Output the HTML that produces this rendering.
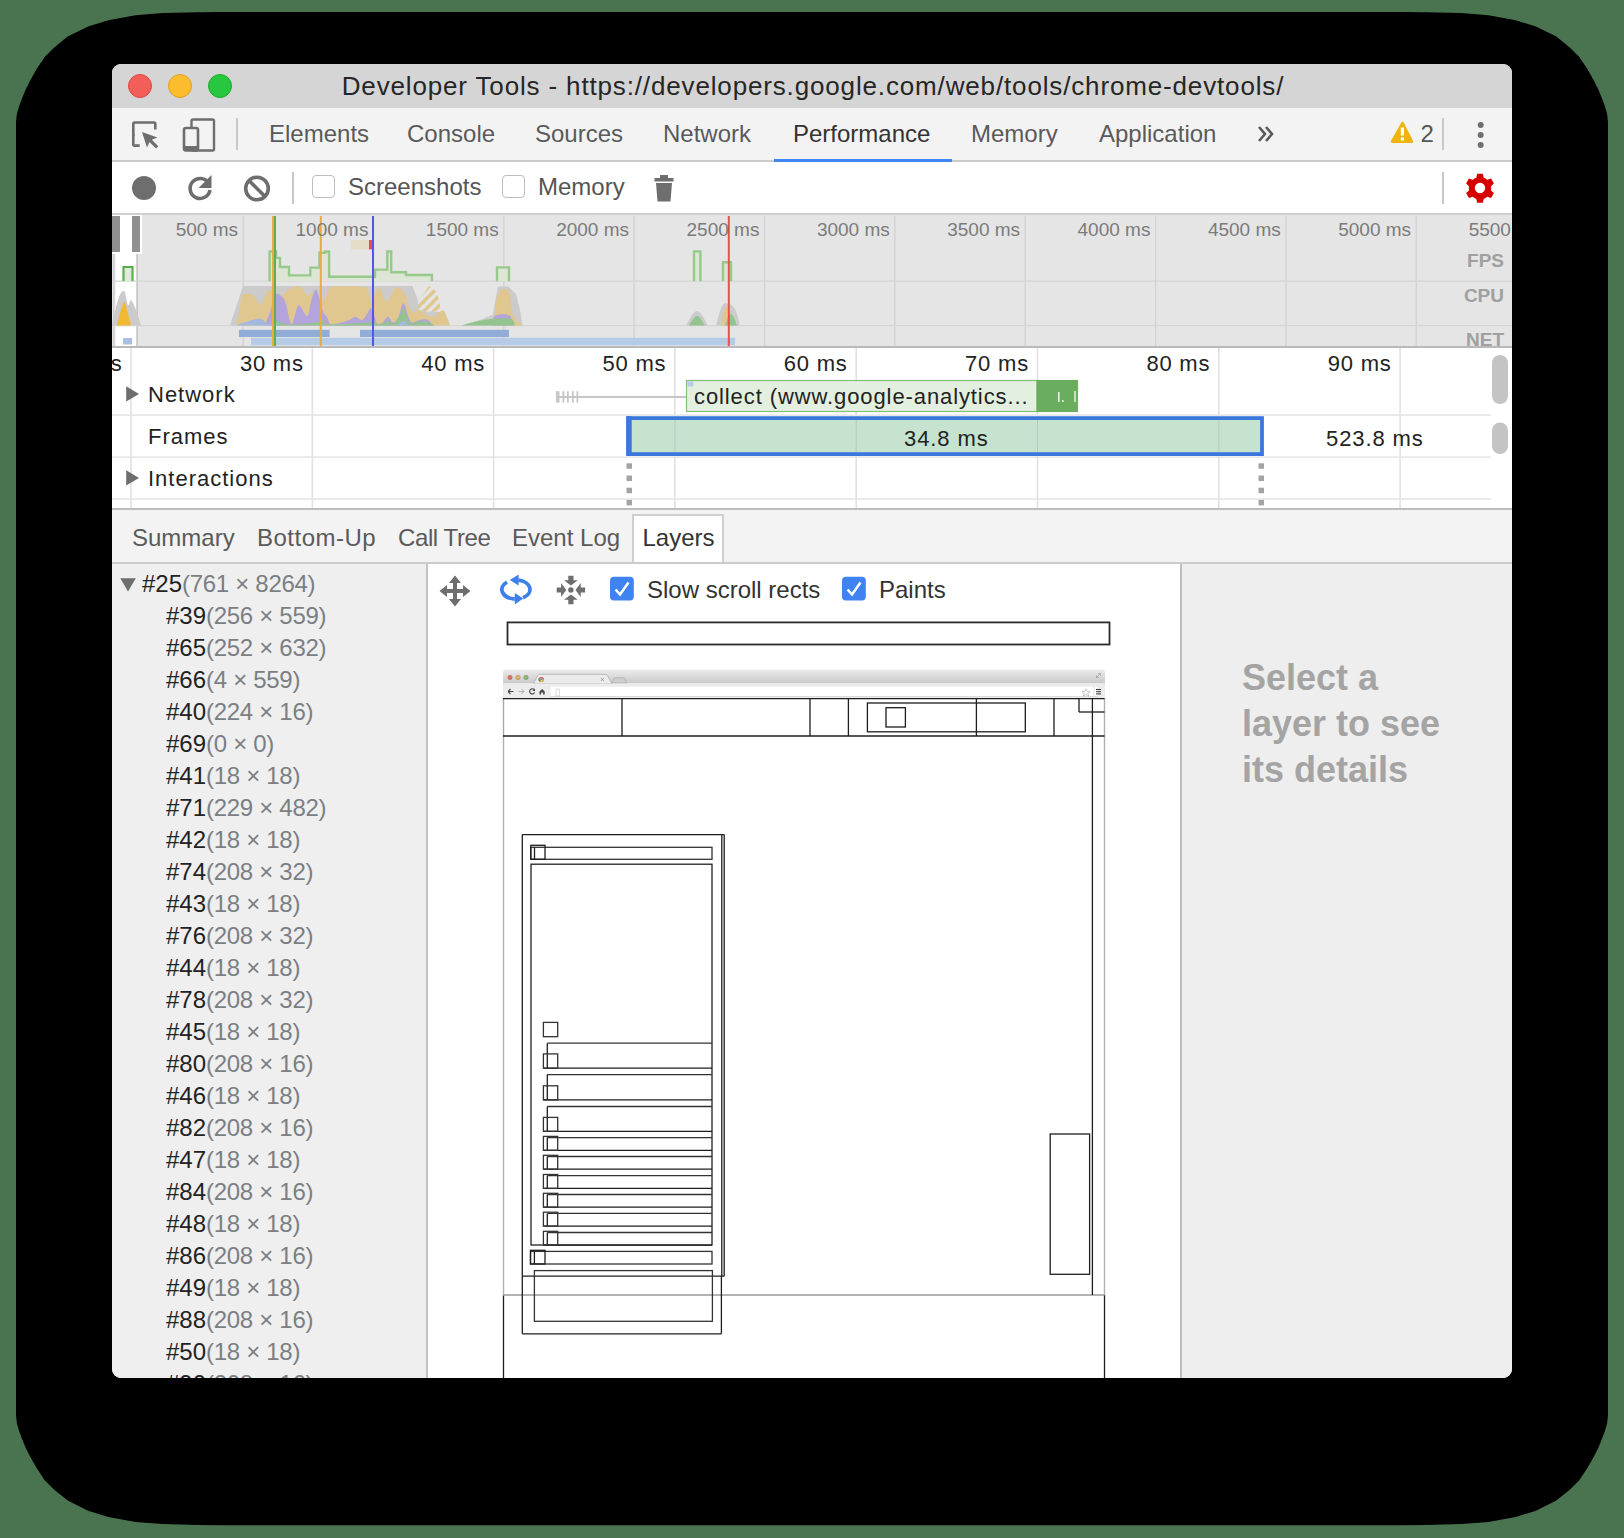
<!DOCTYPE html>
<html><head><meta charset="utf-8">
<style>
*{box-sizing:border-box;margin:0;padding:0}
html,body{width:1624px;height:1538px;overflow:hidden;background:rgb(74,116,79);font-family:"Liberation Sans",sans-serif}
#shadow{position:absolute;left:16px;top:12px;width:1592px;height:1513px;background:#000;border-radius:185px/103px}
#win{position:absolute;left:112px;top:64px;width:1400px;height:1314px;border-radius:9px;overflow:hidden;background:#fff}
.a{position:absolute}
svg{position:absolute;left:0;top:0;overflow:visible}
#title{left:0;top:0;width:1400px;height:44px;background:#d5d5d5}
.tl{position:absolute;top:10px;width:24px;height:24px;border-radius:50%}
#ttext{left:0;top:0;width:1400px;height:44px;line-height:44px;text-align:center;font-size:26px;letter-spacing:0.85px;color:#262626;padding-left:2px}
#tabbar{left:0;top:44px;width:1400px;height:54px;background:#f3f3f3;border-bottom:2px solid #cccccc}
.tab{position:absolute;top:44px;height:52px;line-height:52px;font-size:24px;color:#5a5a5a;white-space:nowrap}
#toolbar{left:0;top:98px;width:1400px;height:52px;background:#fff;border-bottom:1px solid #d0d0d0}
.tbl{position:absolute;top:98px;height:52px;line-height:50px;font-size:24px;color:#555;white-space:nowrap}
.cb{position:absolute;width:23px;height:23px;border:1.5px solid #bdbdbd;border-radius:4px;background:#fff}
.ovl{position:absolute;top:150px;font-size:19px;color:#7b7b7b;white-space:nowrap;line-height:32px;text-align:right}
.ovh{position:absolute;font-size:19px;font-weight:bold;color:#a0a0a0;right:8px;line-height:20px}
.tlh{position:absolute;top:285px;font-size:22px;letter-spacing:0.8px;color:#222;white-space:nowrap;line-height:30px;text-align:right}
.trow{position:absolute;left:36px;font-size:22px;letter-spacing:1px;color:#222;white-space:nowrap;line-height:30px}
</style></head><body>
<svg width="1624" height="1538" style="position:absolute;left:0;top:0"><path d="M16.0 121.9 L16.9 113.8 L19.5 105.0 L22.4 97.5 L25.7 89.4 L29.8 81.3 L36.6 69.1 L44.7 56.9 L54.2 47.4 L67.7 36.6 L88.0 26.4 L108.4 20.3 L135.5 15.2 L162.6 13.1 L197.8 12.2 L220.0 12.0 L1404.0 12.0 L1426.2 12.2 L1461.4 13.1 L1488.5 15.2 L1515.6 20.3 L1536.0 26.4 L1556.3 36.6 L1569.8 47.4 L1579.3 56.9 L1587.4 69.1 L1594.2 81.3 L1598.3 89.4 L1601.6 97.5 L1604.5 105.0 L1607.1 113.8 L1608.0 121.9 L1608.0 1415.3 L1607.1 1423.4 L1604.5 1432.2 L1601.6 1439.7 L1598.3 1447.8 L1594.2 1455.9 L1587.4 1468.1 L1579.3 1480.3 L1569.8 1489.8 L1556.3 1500.6 L1536.0 1510.8 L1515.6 1516.9 L1488.5 1522.0 L1461.4 1524.1 L1426.2 1525.0 L1404.0 1525.2 L220.0 1525.2 L197.8 1525.0 L162.6 1524.1 L135.5 1522.0 L108.4 1516.9 L88.0 1510.8 L67.7 1500.6 L54.2 1489.8 L44.7 1480.3 L36.6 1468.1 L29.8 1455.9 L25.7 1447.8 L22.4 1439.7 L19.5 1432.2 L16.9 1423.4 L16.0 1415.3Z" fill="#000"/></svg>
<div id="win">
  <div class="a" id="title"></div>
  <div class="tl" style="left:16px;background:#f35f58;border:1px solid #e2463f"></div>
  <div class="tl" style="left:56px;background:#fbbd2e;border:1px solid #dfa023"></div>
  <div class="tl" style="left:96px;background:#27c83f;border:1px solid #1dac2b"></div>
  <div class="a" id="ttext">Developer Tools - https://developers.google.com/web/tools/chrome-devtools/</div>
  <div class="a" id="tabbar"></div>
  <div class="tab" style="left:157px">Elements</div>
  <div class="tab" style="left:295px">Console</div>
  <div class="tab" style="left:423px">Sources</div>
  <div class="tab" style="left:551px">Network</div>
  <div class="tab" style="left:681px;color:#333">Performance</div>
  <div class="tab" style="left:859px">Memory</div>
  <div class="tab" style="left:987px">Application</div>
  <div class="tab" style="left:1308.5px;color:#555">2</div>
  <div class="a" style="left:662px;top:95px;width:178px;height:3px;background:#3d85f6"></div>
  <div class="a" id="toolbar"></div>
  <div class="cb" style="left:200px;top:111px"></div>
  <div class="tbl" style="left:236px">Screenshots</div>
  <div class="cb" style="left:390px;top:111px"></div>
  <div class="tbl" style="left:426px">Memory</div>
  <!-- icons: coordinates relative to window -->
  <svg width="1400" height="1314">
    <g fill="none" stroke="#6e6e6e" stroke-width="3">
      <!-- inspect -->
      <path d="M21.3 72 V59.8 Q21.3 58.5 22.6 58.5 H42 Q43.3 58.5 43.3 59.8 V65.5" stroke-width="2.6"/>
      <path d="M21.3 70 V80.3 Q21.3 81.6 22.6 81.6 H27.7" stroke-width="2.6"/>
      <!-- device -->
      <rect x="79.5" y="55.5" width="22.5" height="31" rx="1.5" stroke-width="2.4"/>
    </g>
    <path d="M30 61 L30 61" />
    <path d="M30 68 L45.5 73.5 L39.8 75.8 L46.3 82.2 L44 84.5 L37.5 78 L35 83.5 Z" fill="#6e6e6e"/>
    <rect x="72" y="64" width="14" height="22.5" rx="2" fill="#f3f3f3" stroke="#6e6e6e" stroke-width="2.6"/>
    <rect x="72" y="82" width="14" height="4" fill="#6e6e6e"/>
    <rect x="124" y="54" width="2" height="32" fill="#c8c8c8"/>
    <!-- chevrons -->
    <path d="M1147 63 L1153 70 L1147 77 M1154 63 L1160 70 L1154 77" fill="none" stroke="#5a5a5a" stroke-width="2.6"/>
    <!-- warning -->
    <path d="M1290.5 58.5 L1300 77 Q1300.5 78 1299.5 78 L1280.5 78 Q1279.5 78 1280 77 Z" fill="#eeb40d" stroke="#eeb40d" stroke-width="2" stroke-linejoin="round"/>
    <rect x="1288.8" y="63.5" width="3.2" height="8" fill="#fff"/>
    <rect x="1288.8" y="73.5" width="3.2" height="3" fill="#fff"/>
    <rect x="1330" y="54" width="2" height="32" fill="#c8c8c8"/>
    <circle cx="1368.7" cy="61" r="3" fill="#6e6e6e"/>
    <circle cx="1368.7" cy="71" r="3" fill="#6e6e6e"/>
    <circle cx="1368.7" cy="81" r="3" fill="#6e6e6e"/>
    <!-- toolbar icons -->
    <circle cx="32" cy="124" r="12" fill="#6e6e6e"/>
    <path d="M96.5 119 A10 10 0 1 0 98 126" fill="none" stroke="#6e6e6e" stroke-width="3.6"/>
    <path d="M99.5 111 L99.5 124 L86.5 124 Z" fill="#6e6e6e"/>
    <circle cx="145" cy="124.5" r="11.3" fill="none" stroke="#6e6e6e" stroke-width="3.6"/>
    <path d="M137.2 116.7 L152.8 132.3" stroke="#6e6e6e" stroke-width="3.6"/>
    <rect x="180" y="108" width="2" height="32" fill="#c8c8c8"/>
    <!-- trash -->
    <path d="M542.5 114 h19 v3.5 h-19z M548 111 h8 v3 h-8z" fill="#6e6e6e"/>
    <path d="M544 119 h16 l-1.5 18.5 h-13z" fill="#6e6e6e"/>
    <rect x="1330" y="108" width="2" height="32" fill="#c8c8c8"/>
    <!-- gear -->
    <g transform="translate(1368 124)" fill="#d60000">
      <path id="gear" d="M-2.8 -14.2 h5.6 l0.9 3.9 a10.5 10.5 0 0 1 3.6 2.1 l3.8 -1.2 l2.8 4.9 l-2.9 2.7 a10.5 10.5 0 0 1 0 4.2 l2.9 2.7 l-2.8 4.9 l-3.8 -1.2 a10.5 10.5 0 0 1 -3.6 2.1 l-0.9 3.9 h-5.6 l-0.9 -3.9 a10.5 10.5 0 0 1 -3.6 -2.1 l-3.8 1.2 l-2.8 -4.9 l2.9 -2.7 a10.5 10.5 0 0 1 0 -4.2 l-2.9 -2.7 l2.8 -4.9 l3.8 1.2 a10.5 10.5 0 0 1 3.6 -2.1 z M0 -5.2 a5.2 5.2 0 1 0 0.01 0z" fill-rule="evenodd"/>
    </g>
  </svg>
<svg width="1624" height="1538" style="left:-112px;top:-64px">
<defs>
<pattern id="dots" width="4" height="4" patternUnits="userSpaceOnUse"><rect width="4" height="4" fill="currentColor"/><rect x="1" y="1" width="1" height="1" fill="#fff" opacity=".35"/></pattern>
<pattern id="hatch" width="7" height="7" patternUnits="userSpaceOnUse" patternTransform="rotate(45)"><rect width="7" height="7" fill="#e4e4e4"/><rect width="3.5" height="7" fill="#dfc68d"/></pattern>
</defs>
<rect x="112" y="214" width="1400" height="133" fill="#e5e5e5"/>
<rect x="112" y="215" width="30" height="39" fill="#fff"/>
<rect x="115.5" y="254" width="21" height="92" fill="#fff"/>
<rect x="112" y="214" width="1400" height="1" fill="#d0d0d0"/>
<rect x="242.5" y="216" width="1.3" height="130" fill="#d2d2d2"/>
<rect x="372.9" y="216" width="1.3" height="130" fill="#d2d2d2"/>
<rect x="503.2" y="216" width="1.3" height="130" fill="#d2d2d2"/>
<rect x="633.5" y="216" width="1.3" height="130" fill="#d2d2d2"/>
<rect x="763.9" y="216" width="1.3" height="130" fill="#d2d2d2"/>
<rect x="894.2" y="216" width="1.3" height="130" fill="#d2d2d2"/>
<rect x="1024.6" y="216" width="1.3" height="130" fill="#d2d2d2"/>
<rect x="1154.9" y="216" width="1.3" height="130" fill="#d2d2d2"/>
<rect x="1285.3" y="216" width="1.3" height="130" fill="#d2d2d2"/>
<rect x="1415.6" y="216" width="1.3" height="130" fill="#d2d2d2"/>
<rect x="113" y="254" width="1.5" height="92" fill="#cfcfcf"/>
<rect x="136.3" y="254" width="1.7" height="92" fill="#c8c8c8"/>
<rect x="112" y="280.5" width="1400" height="1.3" fill="#d6d6d6"/>
<rect x="112" y="325" width="1400" height="1.3" fill="#d6d6d6"/>
<rect x="112" y="216" width="8" height="36" fill="#909090"/>
<rect x="132" y="216" width="8" height="36" fill="#909090"/>
<path d="M269.6 281.2 V251.5 H276.1 V257.9 H280 V267 H289 V275.4 H310.3 V267.6 H319.4 V252.8 H325.2 V251.5 H329.1 V276.7 H375 V269.6 H387.3 V251.5 H391.2 V272.2 H406 V275 H431.9 V281.2" fill="#dde6d5" stroke="#98c98c" stroke-width="2.4"/>
<path d="M497 281.2 V267.4 H509 V281.2" fill="#dde6d5" stroke="#98c98c" stroke-width="2.4"/>
<path d="M694 281.2 V251.4 H700.4 V281.2" fill="#dde6d5" stroke="#98c98c" stroke-width="2.4"/>
<path d="M723 281.2 V262.2 H731 V281.2" fill="#dde6d5" stroke="#98c98c" stroke-width="2.4"/>
<path d="M123.5 281 V267 H132.5 V281" fill="#e3ecdc" stroke="#5aad4e" stroke-width="2.2"/>
<path d="M230.0 325.4 L230.0 325.4 L243.0 286.0 L412.5 286.0 L421.6 309.7 L439.7 312.0 L446.0 318.0 L450.0 325.4 L450.0 325.4 Z" fill="#cbcbcb" />
<path d="M461.7 325.4 L461.7 325.4 L480.0 320.0 L492.8 314.8 L497.9 286.4 L508.3 286.4 L516.0 294.0 L520.0 309.7 L522.5 325.4 L522.5 325.4 Z" fill="#cbcbcb" />
<path d="M112.0 325.4 L112.0 325.0 C113.1 320.5 115.8 306.1 118.0 300.0 C120.2 293.9 122.2 290.1 124.0 291.0 C125.8 291.9 126.7 303.4 128.0 305.0 C129.3 306.6 129.6 299.1 131.0 300.0 C132.4 300.9 134.2 305.5 136.0 310.0 C137.8 314.5 140.1 322.3 141.0 325.0 L141.0 325.4 Z" fill="#cbcbcb" />
<path d="M686.0 325.4 L686.0 325.4 C688.0 322.8 693.0 311.0 697.0 311.0 C701.0 311.0 706.0 322.8 708.0 325.4 L708.0 325.4 Z" fill="#cbcbcb" />
<path d="M716.0 325.4 L716.0 325.4 C717.1 321.9 719.8 309.9 722.0 306.0 C724.2 302.1 725.7 303.3 728.0 303.8 C730.3 304.3 732.8 305.1 735.0 309.0 C737.2 312.9 739.1 322.4 740.0 325.4 L740.0 325.4 Z" fill="#cbcbcb" />
<path d="M417.5 302 L429 286 L437 292 L441 310 L428 312 L419 310 Z" fill="url(#hatch)"/>
<path d="M236.6 325.4 L236.6 325.4 C237.6 320.3 240.4 302.4 241.8 296.7 C243.2 291.1 242.5 294.5 244.4 294.1 C246.3 293.8 250.1 293.9 252.2 294.8 C254.3 295.7 254.5 297.6 256.0 299.3 C257.5 301.1 259.2 304.5 260.6 304.5 C262.0 304.5 262.5 301.9 263.8 299.3 C265.1 296.8 266.3 291.7 267.7 290.3 C269.1 288.9 270.0 290.9 271.6 291.6 C273.1 292.3 274.5 293.2 276.1 294.1 C277.7 295.1 278.2 297.7 280.6 296.7 C283.0 295.8 286.4 290.8 289.7 289.0 C292.9 287.1 296.1 286.1 298.7 286.4 C301.3 286.6 302.3 288.6 303.9 290.3 C305.5 291.9 305.9 295.0 307.8 295.4 C309.6 295.9 311.9 291.7 314.2 292.8 C316.6 294.0 318.4 301.7 320.7 301.9 C323.0 302.1 325.5 296.7 327.2 294.1 C328.8 291.6 328.1 289.1 329.7 287.7 C331.4 286.3 329.9 286.5 336.2 286.4 C342.5 286.3 358.8 285.6 364.7 287.0 C370.5 288.4 367.4 291.5 368.5 294.1 C369.7 296.8 370.2 301.7 371.1 301.9 C372.1 302.1 372.3 298.0 373.7 295.4 C375.1 292.9 377.3 287.9 378.9 287.7 C380.5 287.4 381.4 291.6 382.8 294.1 C384.2 296.7 385.0 301.9 386.6 301.9 C388.3 301.9 390.2 296.7 391.8 294.1 C393.4 291.6 393.8 288.4 395.7 287.7 C397.6 287.0 400.3 288.6 402.2 290.3 C404.0 291.9 404.9 293.9 406.0 296.7 C407.2 299.5 407.5 303.0 408.6 305.8 C409.8 308.6 410.9 311.5 412.5 312.2 C414.2 312.9 415.2 309.2 417.8 309.7 C420.3 310.1 424.0 313.6 426.8 314.8 C429.6 316.1 430.7 317.5 433.3 316.8 C435.8 316.1 438.9 311.8 441.0 311.0 C443.1 310.1 443.3 309.6 444.9 312.2 C446.5 314.9 449.2 323.1 450.1 325.4 L450.1 325.4 Z" fill="#dfc78f" />
<path d="M494.0 325.4 L494.0 317.4 C494.7 313.2 495.9 299.1 498.0 294.0 C500.1 288.9 503.6 289.0 505.7 289.0 C507.8 289.0 508.5 289.9 509.6 294.0 C510.7 298.1 510.6 307.1 512.0 312.0 C513.4 316.9 515.2 318.9 517.3 321.3 C519.4 323.7 522.6 324.7 523.8 325.4 L523.8 325.4 Z" fill="#dfc78f" />
<path d="M721.0 325.4 L721.0 325.4 C721.5 322.6 722.9 313.2 724.0 310.0 C725.1 306.8 725.9 307.1 727.0 307.5 C728.1 307.9 728.9 308.8 730.0 312.0 C731.1 315.2 732.5 323.0 733.0 325.4 L733.0 325.4 Z" fill="#dfc78f" />
<path d="M117.0 325.4 L117.0 325.0 C117.7 322.3 119.7 314.1 121.0 310.0 C122.3 305.9 123.2 302.0 124.3 302.0 C125.4 302.0 125.8 305.9 127.0 310.0 C128.2 314.1 130.3 322.3 131.0 325.0 L131.0 325.4 Z" fill="#f2b935" />
<path d="M263.8 325.4 L263.8 325.4 C264.3 324.7 265.5 323.2 266.4 321.3 C267.3 319.4 268.0 317.4 269.0 314.8 C269.9 312.3 270.3 310.8 271.6 307.1 C272.8 303.3 274.2 296.0 276.1 294.1 C277.9 292.3 280.2 295.1 281.9 296.7 C283.6 298.4 284.4 299.0 285.8 303.2 C287.2 307.4 288.5 316.2 289.7 320.0 C290.8 323.8 290.8 325.4 292.2 324.1 C293.6 321.8 296.0 310.4 297.4 307.1 C298.8 303.8 298.8 304.8 300.0 305.8 C301.2 306.7 302.5 310.5 303.9 312.2 C305.3 314.0 306.4 317.8 307.8 315.5 C309.2 313.1 310.2 304.0 311.6 299.3 C313.0 294.7 314.4 290.5 315.5 289.6 C316.7 288.7 317.2 291.7 318.1 294.1 C319.0 296.6 319.8 299.9 320.7 303.2 C321.6 306.5 322.1 309.7 323.3 312.2 C324.4 314.8 325.8 315.3 327.2 317.4 C328.6 319.6 328.5 323.2 331.0 324.1 C333.6 325.1 338.1 323.3 341.4 322.6 C344.6 321.8 346.6 321.1 349.1 320.0 C351.7 319.0 353.3 316.8 355.6 316.8 C357.9 316.8 360.0 320.6 362.1 320.0 C364.2 319.4 365.6 315.6 367.2 313.5 C368.9 311.4 369.7 307.7 371.1 308.4 C372.5 309.1 373.8 314.6 375.0 317.4 C376.2 320.3 376.2 323.2 377.6 324.1 C379.0 325.1 380.9 323.9 382.8 322.6 C384.6 321.3 386.1 316.8 387.9 316.8 C389.8 316.8 391.2 322.5 393.1 322.6 C395.0 322.7 396.4 320.9 398.3 317.4 C400.1 313.9 401.6 303.2 403.5 303.2 C405.3 303.2 407.0 313.9 408.6 317.4 C410.3 320.9 410.9 322.0 412.5 322.6 C414.2 323.2 415.2 321.2 417.8 320.6 C420.3 320.1 424.3 318.8 426.8 319.4 C429.4 319.9 430.8 322.8 432.0 323.9 C433.1 325.0 433.0 325.2 433.3 325.4 L433.3 325.4 Z" fill="#b3a5db" />
<path d="M492.0 325.4 L492.0 325.4 C492.6 323.6 492.1 317.3 495.3 315.5 C498.5 313.7 506.6 313.7 509.6 315.5 C512.6 317.3 511.6 323.6 512.0 325.4 L512.0 325.4 Z" fill="#b3a5db" />
<path d="M274.1 325.4 L274.1 325.4 C274.4 324.5 274.5 320.6 275.4 320.0 C276.4 319.4 276.8 321.1 279.3 321.9 C281.9 322.8 285.0 324.2 289.7 324.5 C294.3 324.9 300.5 324.2 305.2 323.9 C309.8 323.5 312.7 323.1 315.5 322.6 C318.3 322.1 319.1 322.0 320.7 321.3 C322.3 320.6 323.2 318.2 324.6 318.7 C326.0 319.2 320.8 323.4 328.5 324.1 C336.1 324.8 359.8 323.3 367.2 322.6 C374.7 321.8 368.4 320.0 369.8 320.0 C371.2 320.0 373.1 321.8 375.0 322.6 C376.9 323.3 377.9 324.4 380.2 324.1 C382.5 323.9 385.6 321.3 387.9 321.3 C390.3 321.3 391.0 325.1 393.1 324.1 C395.2 323.2 397.7 319.0 399.6 316.1 C401.4 313.3 402.1 308.1 403.5 308.4 C404.9 308.6 405.9 314.6 407.3 317.4 C408.7 320.3 409.8 323.3 411.2 324.1 C412.6 325.0 413.1 322.5 415.2 321.9 C417.3 321.4 420.1 321.1 422.9 321.3 C425.7 321.5 428.6 322.5 430.7 323.2 C432.8 324.0 433.9 325.0 434.6 325.4 L434.6 325.4 Z" fill="#93c38f" />
<path d="M461.7 325.4 L461.7 325.4 C464.5 324.7 471.4 322.5 477.0 321.3 C482.6 320.1 486.7 319.1 492.8 318.7 C498.9 318.3 507.0 317.8 510.9 319.0 C514.8 320.2 514.0 324.2 514.7 325.4 L514.7 325.4 Z" fill="#93c38f" />
<path d="M689.0 325.4 L689.0 325.4 C690.4 323.7 694.1 316.0 697.0 316.0 C699.9 316.0 703.6 323.7 705.0 325.4 L705.0 325.4 Z" fill="#93c38f" />
<path d="M725.0 325.4 L725.0 325.4 C726.1 323.3 728.8 314.0 731.0 314.0 C733.2 314.0 735.9 323.3 737.0 325.4 L737.0 325.4 Z" fill="#93c38f" />
<path d="M236.6 325.4 L236.6 325.4 C238.0 324.9 240.2 323.8 244.4 322.6 C248.6 321.4 255.7 318.4 259.9 318.7 C264.1 319.0 265.1 323.4 267.7 324.1 C270.2 324.8 271.8 322.4 274.1 322.6 C276.5 322.8 279.4 324.9 280.6 325.4 L280.6 325.4 Z" fill="#a2b8de" />
<path d="M398.3 325.4 L398.3 325.4 C399.2 324.6 401.6 320.6 403.5 320.6 C405.3 320.6 407.7 324.6 408.6 325.4 L408.6 325.4 Z" fill="#a2b8de" />
<rect x="239" y="329.8" width="90.6" height="7.2" fill="#91acd6"/>
<rect x="360" y="329.8" width="149" height="7.2" fill="#91acd6"/>
<rect x="251" y="337.8" width="484" height="7.4" fill="#b5cbe6"/>
<rect x="123" y="338" width="9" height="6.5" fill="#a9c0e3"/>
<rect x="351" y="240" width="18" height="9.4" fill="#e4dcc5"/>
<rect x="369" y="240" width="3.2" height="9.4" fill="#ee4b4b"/>
<rect x="272" y="216" width="2" height="131" fill="#eaac3f"/>
<rect x="274" y="216" width="2" height="131" fill="#5daf4f"/>
<rect x="319.8" y="216" width="2" height="131" fill="#eaac3f"/>
<rect x="372" y="216" width="2" height="131" fill="#5454f0"/>
<rect x="727.8" y="216" width="2" height="131" fill="#ef4c4c"/>
<rect x="112" y="346" width="1400" height="2" fill="#b9b9b9"/>
<rect x="130.2" y="348" width="1.6" height="161" fill="#e2e2e2"/>
<rect x="311.5" y="348" width="1.6" height="161" fill="#e2e2e2"/>
<rect x="492.8" y="348" width="1.6" height="161" fill="#e2e2e2"/>
<rect x="674.1" y="348" width="1.6" height="161" fill="#e2e2e2"/>
<rect x="855.4" y="348" width="1.6" height="161" fill="#e2e2e2"/>
<rect x="1036.7" y="348" width="1.6" height="161" fill="#e2e2e2"/>
<rect x="1218.0" y="348" width="1.6" height="161" fill="#e2e2e2"/>
<rect x="1399.3" y="348" width="1.6" height="161" fill="#e2e2e2"/>
<rect x="112" y="414.3" width="1379" height="1.6" fill="#e6e6e6"/>
<rect x="112" y="456.3" width="1379" height="1.6" fill="#e6e6e6"/>
<rect x="112" y="498.3" width="1379" height="1.6" fill="#e6e6e6"/>
<rect x="112" y="508" width="1400" height="2" fill="#bdbdbd"/>
<rect x="556" y="396" width="130" height="2" fill="#c6c6c6"/>
<rect x="556" y="391.2" width="3.5" height="11.4" fill="#c6c6c6"/>
<rect x="562.5" y="391.2" width="1.8" height="11.4" fill="#c6c6c6"/>
<rect x="567" y="391.2" width="1.8" height="11.4" fill="#c6c6c6"/>
<rect x="572" y="391.2" width="1.8" height="11.4" fill="#c6c6c6"/>
<rect x="576.5" y="391.2" width="1.8" height="11.4" fill="#c6c6c6"/>
<rect x="686.5" y="380.5" width="391" height="31" fill="#e4f0df" stroke="#85c07a" stroke-width="1.2"/>
<rect x="1036.3" y="380" width="41.5" height="32" fill="#6aad5e"/>
<rect x="687.5" y="381.5" width="6" height="5" fill="#b8cbe8"/>
<rect x="1058" y="392" width="1.6" height="10" fill="#e8f2e4"/>
<rect x="1062" y="400" width="1.6" height="2" fill="#e8f2e4"/>
<rect x="1074" y="391" width="2" height="11" fill="#c8e0c0"/>
<rect x="628.3" y="418.1" width="633.7" height="36" fill="#c6e3cf" stroke="#3a78de" stroke-width="3.8"/>
<rect x="626.2" y="416.2" width="5.5" height="39.6" fill="#3a78de"/>
<rect x="674.4" y="420" width="1" height="32" fill="#b8c9bd"/>
<rect x="855.7" y="420" width="1" height="32" fill="#b8c9bd"/>
<rect x="1037.0" y="420" width="1" height="32" fill="#b8c9bd"/>
<rect x="1218.3" y="420" width="1" height="32" fill="#b8c9bd"/>
<rect x="626.5" y="463.3" width="5.5" height="5.5" fill="#a3a3a3"/>
<rect x="626.5" y="475.5" width="5.5" height="5.5" fill="#a3a3a3"/>
<rect x="626.5" y="487.7" width="5.5" height="5.5" fill="#a3a3a3"/>
<rect x="626.5" y="499.9" width="5.5" height="5.5" fill="#a3a3a3"/>
<rect x="1258.5" y="463.3" width="5.5" height="5.5" fill="#a3a3a3"/>
<rect x="1258.5" y="475.5" width="5.5" height="5.5" fill="#a3a3a3"/>
<rect x="1258.5" y="487.7" width="5.5" height="5.5" fill="#a3a3a3"/>
<rect x="1258.5" y="499.9" width="5.5" height="5.5" fill="#a3a3a3"/>
<rect x="1492" y="355" width="16" height="49" rx="8" fill="#c4c4c4"/>
<rect x="1492" y="422.5" width="16" height="31.5" rx="8" fill="#c4c4c4"/>
</svg>
<div class="ovl" style="left:-74.0px;width:200px;top:150px">500 ms</div>
<div class="ovl" style="left:56.4px;width:200px;top:150px">1000 ms</div>
<div class="ovl" style="left:186.7px;width:200px;top:150px">1500 ms</div>
<div class="ovl" style="left:317.0px;width:200px;top:150px">2000 ms</div>
<div class="ovl" style="left:447.4px;width:200px;top:150px">2500 ms</div>
<div class="ovl" style="left:577.8px;width:200px;top:150px">3000 ms</div>
<div class="ovl" style="left:708.1px;width:200px;top:150px">3500 ms</div>
<div class="ovl" style="left:838.4px;width:200px;top:150px">4000 ms</div>
<div class="ovl" style="left:968.8px;width:200px;top:150px">4500 ms</div>
<div class="ovl" style="left:1099.1px;width:200px;top:150px">5000 ms</div>
<div class="ovl" style="left:1229.5px;width:200px;top:150px">5500 ms</div>
<div class="ovh" style="top:187px">FPS</div>
<div class="ovh" style="top:222px">CPU</div>
<div class="ovh" style="top:266px">NET</div>
<div class="tlh" style="left:-189.5px;width:200px">20 ms</div>
<div class="tlh" style="left:-8.2px;width:200px">30 ms</div>
<div class="tlh" style="left:173.1px;width:200px">40 ms</div>
<div class="tlh" style="left:354.4px;width:200px">50 ms</div>
<div class="tlh" style="left:535.7px;width:200px">60 ms</div>
<div class="tlh" style="left:717.0px;width:200px">70 ms</div>
<div class="tlh" style="left:898.3px;width:200px">80 ms</div>
<div class="tlh" style="left:1079.6px;width:200px">90 ms</div>
<div class="trow" style="top:316px">Network</div>
<div class="trow" style="top:358px">Frames</div>
<div class="trow" style="top:400px">Interactions</div>
<svg width="40" height="200" style="left:0;top:0"><path d="M14.2 322.3 L27 329.9 L14.2 337.6Z" fill="#6e6e6e"/><path d="M14.2 406.3 L27 413.9 L14.2 421.6Z" fill="#6e6e6e"/></svg>
<div class="a" style="left:582px;top:318px;font-size:22px;letter-spacing:0.9px;color:#222;line-height:30px">collect (www.google-analytics...</div>
<div class="a" style="left:792px;top:360px;font-size:22px;letter-spacing:0.9px;color:#222;line-height:30px">34.8 ms</div>
<div class="a" style="left:1214px;top:360px;font-size:22px;letter-spacing:0.9px;color:#222;line-height:30px">523.8 ms</div>
<div class="a" style="left:0;top:446px;width:1400px;height:54px;background:#f3f3f3;border-bottom:2px solid #cccccc"></div>
<div class="a" style="left:520px;top:450px;width:91.5px;height:48px;background:#fff;border:2px solid #cfcfcf;border-bottom:none"></div>
<div class="a" style="left:20px;top:448px;height:52px;line-height:52px;font-size:24px;color:#5a5a5a;white-space:nowrap">Summary</div>
<div class="a" style="left:145px;top:448px;height:52px;line-height:52px;font-size:24px;color:#5a5a5a;white-space:nowrap"><span style="letter-spacing:0.5px">Bottom-Up</span></div>
<div class="a" style="left:286px;top:448px;height:52px;line-height:52px;font-size:24px;color:#5a5a5a;white-space:nowrap"><span style="letter-spacing:-0.4px">Call Tree</span></div>
<div class="a" style="left:400px;top:448px;height:52px;line-height:52px;font-size:24px;color:#5a5a5a;white-space:nowrap">Event Log</div>
<div class="a" style="left:530.5px;top:448px;height:52px;line-height:52px;font-size:24px;color:#333;white-space:nowrap">Layers</div>
<div class="a" style="left:0;top:500px;width:316px;height:814px;background:#efefef;border-right:2px solid #c4c4c4"></div>
<div class="a" style="left:30px;top:504.6px;line-height:30px;font-size:24px;white-space:nowrap;color:#222">#25<span style="color:#7b7f84;letter-spacing:-0.3px">(761 × 8264)</span></div>
<div class="a" style="left:54px;top:536.6px;line-height:30px;font-size:24px;white-space:nowrap;color:#222">#39<span style="color:#7b7f84;letter-spacing:-0.3px">(256 × 559)</span></div>
<div class="a" style="left:54px;top:568.6px;line-height:30px;font-size:24px;white-space:nowrap;color:#222">#65<span style="color:#7b7f84;letter-spacing:-0.3px">(252 × 632)</span></div>
<div class="a" style="left:54px;top:600.6px;line-height:30px;font-size:24px;white-space:nowrap;color:#222">#66<span style="color:#7b7f84;letter-spacing:-0.3px">(4 × 559)</span></div>
<div class="a" style="left:54px;top:632.6px;line-height:30px;font-size:24px;white-space:nowrap;color:#222">#40<span style="color:#7b7f84;letter-spacing:-0.3px">(224 × 16)</span></div>
<div class="a" style="left:54px;top:664.6px;line-height:30px;font-size:24px;white-space:nowrap;color:#222">#69<span style="color:#7b7f84;letter-spacing:-0.3px">(0 × 0)</span></div>
<div class="a" style="left:54px;top:696.6px;line-height:30px;font-size:24px;white-space:nowrap;color:#222">#41<span style="color:#7b7f84;letter-spacing:-0.3px">(18 × 18)</span></div>
<div class="a" style="left:54px;top:728.6px;line-height:30px;font-size:24px;white-space:nowrap;color:#222">#71<span style="color:#7b7f84;letter-spacing:-0.3px">(229 × 482)</span></div>
<div class="a" style="left:54px;top:760.6px;line-height:30px;font-size:24px;white-space:nowrap;color:#222">#42<span style="color:#7b7f84;letter-spacing:-0.3px">(18 × 18)</span></div>
<div class="a" style="left:54px;top:792.6px;line-height:30px;font-size:24px;white-space:nowrap;color:#222">#74<span style="color:#7b7f84;letter-spacing:-0.3px">(208 × 32)</span></div>
<div class="a" style="left:54px;top:824.6px;line-height:30px;font-size:24px;white-space:nowrap;color:#222">#43<span style="color:#7b7f84;letter-spacing:-0.3px">(18 × 18)</span></div>
<div class="a" style="left:54px;top:856.6px;line-height:30px;font-size:24px;white-space:nowrap;color:#222">#76<span style="color:#7b7f84;letter-spacing:-0.3px">(208 × 32)</span></div>
<div class="a" style="left:54px;top:888.6px;line-height:30px;font-size:24px;white-space:nowrap;color:#222">#44<span style="color:#7b7f84;letter-spacing:-0.3px">(18 × 18)</span></div>
<div class="a" style="left:54px;top:920.6px;line-height:30px;font-size:24px;white-space:nowrap;color:#222">#78<span style="color:#7b7f84;letter-spacing:-0.3px">(208 × 32)</span></div>
<div class="a" style="left:54px;top:952.6px;line-height:30px;font-size:24px;white-space:nowrap;color:#222">#45<span style="color:#7b7f84;letter-spacing:-0.3px">(18 × 18)</span></div>
<div class="a" style="left:54px;top:984.6px;line-height:30px;font-size:24px;white-space:nowrap;color:#222">#80<span style="color:#7b7f84;letter-spacing:-0.3px">(208 × 16)</span></div>
<div class="a" style="left:54px;top:1016.6px;line-height:30px;font-size:24px;white-space:nowrap;color:#222">#46<span style="color:#7b7f84;letter-spacing:-0.3px">(18 × 18)</span></div>
<div class="a" style="left:54px;top:1048.6px;line-height:30px;font-size:24px;white-space:nowrap;color:#222">#82<span style="color:#7b7f84;letter-spacing:-0.3px">(208 × 16)</span></div>
<div class="a" style="left:54px;top:1080.6px;line-height:30px;font-size:24px;white-space:nowrap;color:#222">#47<span style="color:#7b7f84;letter-spacing:-0.3px">(18 × 18)</span></div>
<div class="a" style="left:54px;top:1112.6px;line-height:30px;font-size:24px;white-space:nowrap;color:#222">#84<span style="color:#7b7f84;letter-spacing:-0.3px">(208 × 16)</span></div>
<div class="a" style="left:54px;top:1144.6px;line-height:30px;font-size:24px;white-space:nowrap;color:#222">#48<span style="color:#7b7f84;letter-spacing:-0.3px">(18 × 18)</span></div>
<div class="a" style="left:54px;top:1176.6px;line-height:30px;font-size:24px;white-space:nowrap;color:#222">#86<span style="color:#7b7f84;letter-spacing:-0.3px">(208 × 16)</span></div>
<div class="a" style="left:54px;top:1208.6px;line-height:30px;font-size:24px;white-space:nowrap;color:#222">#49<span style="color:#7b7f84;letter-spacing:-0.3px">(18 × 18)</span></div>
<div class="a" style="left:54px;top:1240.6px;line-height:30px;font-size:24px;white-space:nowrap;color:#222">#88<span style="color:#7b7f84;letter-spacing:-0.3px">(208 × 16)</span></div>
<div class="a" style="left:54px;top:1272.6px;line-height:30px;font-size:24px;white-space:nowrap;color:#222">#50<span style="color:#7b7f84;letter-spacing:-0.3px">(18 × 18)</span></div>
<div class="a" style="left:54px;top:1304.6px;line-height:30px;font-size:24px;white-space:nowrap;color:#222">#90<span style="color:#7b7f84;letter-spacing:-0.3px">(208 × 16)</span></div>
<svg width="40" height="600" style="left:0;top:0"><path d="M8.3 514.3 L23.8 514.3 L16 527.6Z" fill="#6e6e6e"/></svg>
<div class="a" style="left:1068px;top:500px;width:332px;height:814px;background:#eeeeee;border-left:2px solid #bfbfbf"></div>
<div class="a" style="left:1130px;top:591px;width:260px;font-size:36px;font-weight:bold;line-height:46px;color:#a4a4a4">Select a<br>layer to see<br>its details</div>
<div class="a" style="left:535px;top:511px;height:30px;line-height:30px;font-size:24px;color:#333;white-space:nowrap">Slow scroll rects</div>
<div class="a" style="left:767px;top:511px;height:30px;line-height:30px;font-size:24px;color:#333;white-space:nowrap">Paints</div>
<svg width="1624" height="1538" style="left:-112px;top:-64px">
<g fill="#6e6e6e" transform="translate(455 591)"><path d="M-2 -9 h4 v7 h7 v4 h-7 v7 h-4 v-7 h-7 v-4 h7z"/><path d="M0 -15.5 L6 -8 H-6Z M0 15.5 L6 8 H-6Z M-15.5 0 L-8 6 V-6Z M15.5 0 L8 6 V-6Z"/></g>
<g fill="none" stroke="#3d80ec" stroke-width="3.8"><path d="M518.4 580.1 A14 9.5 0 0 1 523 597.7"/><path d="M514.8 599 A14 9.5 0 0 1 507 582.2"/></g>
<path d="M509.8 580 L518.6 574.6 L518.6 585.4Z" fill="#3d80ec"/><path d="M523.2 598.6 L514.8 593 L514.8 604.4Z" fill="#3d80ec"/>
<g fill="#6e6e6e" transform="translate(570.9 590)"><circle r="2.7"/><path id="ra" d="M-2.6 -14.2 H2.6 V-9.8 H6.9 L0 -4.6 L-6.9 -9.8 H-2.6Z"/><use href="#ra" transform="rotate(90)"/><use href="#ra" transform="rotate(180)"/><use href="#ra" transform="rotate(270)"/></g>
<rect x="610" y="576.8" width="23.8" height="23.8" rx="4" fill="#3f83f0"/>
<path d="M615.5 589.5 L620 594.5 L628.5 582.5" fill="none" stroke="#fff" stroke-width="2.6"/>
<rect x="842" y="576.8" width="23.8" height="23.8" rx="4" fill="#3f83f0"/>
<path d="M847.5 589.5 L852 594.5 L860.5 582.5" fill="none" stroke="#fff" stroke-width="2.6"/>
<rect x="507.5" y="622.4" width="602.0" height="22.1" fill="none" stroke="#2a2a2a" stroke-width="1.8"/>
<defs><linearGradient id="tg" x1="0" y1="0" x2="0" y2="1"><stop offset="0" stop-color="#ececec"/><stop offset="1" stop-color="#c9c9c9"/></linearGradient></defs>
<path d="M503 683.6 V672.4 Q503 669.4 506 669.4 H1102 Q1105 669.4 1105 672.4 V683.6Z" fill="url(#tg)"/>
<path d="M533.5 683.8 L537.8 675.2 Q538.5 674.3 540 674.3 H605 Q606.5 674.3 607.3 675.2 L612 683.8Z" fill="#ebebeb" stroke="#a9a9a9" stroke-width="0.7"/>
<path d="M612 683 L614 678.5 Q614.5 677.8 615.5 677.8 H623.5 Q624.5 677.8 625 678.5 L626.5 683Z" fill="#cfcfcf" stroke="#a0a0a0" stroke-width="0.6"/>
<circle cx="510" cy="677.5" r="2.2" fill="#e56b63" stroke="#9a7a6a" stroke-width="0.5"/>
<circle cx="518" cy="677.5" r="2.2" fill="#e9b451" stroke="#9a7a6a" stroke-width="0.5"/>
<circle cx="526" cy="677.5" r="2.2" fill="#7fbf71" stroke="#9a7a6a" stroke-width="0.5"/>
<circle cx="541.3" cy="679.5" r="2.6" fill="#e0463a"/><path d="M541.3 679.5 L543.9 679.5 A2.6 2.6 0 0 1 540 681.8Z" fill="#f2c230"/><path d="M541.3 679.5 L540 681.8 A2.6 2.6 0 0 1 538.9 678.2Z" fill="#3aa757"/><circle cx="541.3" cy="679.5" r="1.1" fill="#4a7fd8" stroke="#fff" stroke-width="0.4"/>
<path d="M600.8 678 l3 3 M603.8 678 l-3 3" stroke="#8a8a8a" stroke-width="0.7"/>
<rect x="503" y="683.6" width="602" height="14.6" fill="#ececec"/>
<rect x="550.7" y="686.8" width="547" height="10" rx="1" fill="#fff"/>
<rect x="550.7" y="696" width="547" height="1" fill="#dadada"/>
<path d="M1094 686.8 V697" stroke="#d8d8d8" stroke-width="0.8"/>
<path d="M556 689 h3.5 v7 h-3.5z" fill="none" stroke="#bbb" stroke-width="0.5"/>
<path d="M508 691.5 h5.5 M508 691.5 l2.5 -2.5 M508 691.5 l2.5 2.5" stroke="#444" stroke-width="1.1" fill="none"/>
<path d="M518.5 691.5 h5.5 M524 691.5 l-2.5 -2.5 M524 691.5 l-2.5 2.5" stroke="#b0b0b0" stroke-width="1" fill="none"/>
<path d="M534.3 689.7 A2.6 2.6 0 1 0 534.6 692.5" stroke="#444" stroke-width="1.1" fill="none"/><path d="M535 688.5 v2.5 h-2.5z" fill="#444"/>
<path d="M539.5 694.5 v-3 l2.6 -2.5 l2.6 2.5 v3 h-1.6 v-2 h-2 v2z" fill="#444"/>
<path d="M1086 689 l1.3 2.6 h2.7 l-2.2 1.8 l0.9 2.8 l-2.7 -1.8 l-2.7 1.8 l0.9 -2.8 l-2.2 -1.8 h2.7z" fill="none" stroke="#a0a0a0" stroke-width="0.6"/>
<path d="M1096 689.5 h5 M1096 691.7 h5 M1096 693.9 h5" stroke="#333" stroke-width="1"/>
<path d="M1096.5 677.5 l4 -4 M1100.5 673.5 v2.2 M1100.5 673.5 h-2.2 M1096.5 677.5 v-2.2 M1096.5 677.5 h2.2" stroke="#999" stroke-width="0.7"/>
<line x1="503.5" y1="698.0" x2="503.5" y2="736.0" stroke="#a8a8a8" stroke-width="1.4"/>
<line x1="503.5" y1="736.0" x2="503.5" y2="1295.0" stroke="#b0b0b0" stroke-width="1.4"/>
<line x1="503.5" y1="1295.0" x2="503.5" y2="1378.0" stroke="#1e1e1e" stroke-width="1.3"/>
<line x1="1104.5" y1="698.0" x2="1104.5" y2="1295.0" stroke="#b0b0b0" stroke-width="1.4"/>
<line x1="1104.5" y1="1295.0" x2="1104.5" y2="1378.0" stroke="#1e1e1e" stroke-width="1.3"/>
<line x1="503.0" y1="1295.0" x2="1104.5" y2="1295.0" stroke="#9a9a9a" stroke-width="1.4"/>
<line x1="503.0" y1="698.6" x2="1104.5" y2="698.6" stroke="#1e1e1e" stroke-width="1.3"/>
<line x1="503.0" y1="736.0" x2="1104.5" y2="736.0" stroke="#1e1e1e" stroke-width="1.3"/>
<line x1="622.0" y1="698.0" x2="622.0" y2="736.0" stroke="#1e1e1e" stroke-width="1.3"/>
<line x1="810.0" y1="698.0" x2="810.0" y2="736.0" stroke="#1e1e1e" stroke-width="1.3"/>
<line x1="848.4" y1="698.0" x2="848.4" y2="736.0" stroke="#1e1e1e" stroke-width="1.3"/>
<line x1="1054.0" y1="698.0" x2="1054.0" y2="736.0" stroke="#1e1e1e" stroke-width="1.3"/>
<line x1="1092.4" y1="698.0" x2="1092.4" y2="1295.0" stroke="#1e1e1e" stroke-width="1.3"/>
<rect x="867.4" y="703.0" width="157.9" height="28.8" fill="none" stroke="#1e1e1e" stroke-width="1.3"/>
<line x1="976.4" y1="698.0" x2="976.4" y2="736.0" stroke="#1e1e1e" stroke-width="1.3"/>
<rect x="886.0" y="707.7" width="19.4" height="19.3" fill="none" stroke="#1e1e1e" stroke-width="1.3"/>
<line x1="1079.0" y1="698.0" x2="1079.0" y2="712.0" stroke="#1e1e1e" stroke-width="1.3"/>
<line x1="1079.0" y1="712.0" x2="1104.5" y2="712.0" stroke="#1e1e1e" stroke-width="1.3"/>
<line x1="522.3" y1="834.6" x2="724.2" y2="834.6" stroke="#1e1e1e" stroke-width="1.3"/>
<line x1="522.3" y1="834.6" x2="522.3" y2="1333.8" stroke="#1e1e1e" stroke-width="1.3"/>
<line x1="724.2" y1="834.6" x2="724.2" y2="1276.2" stroke="#1e1e1e" stroke-width="1.3"/>
<line x1="721.8" y1="834.6" x2="721.8" y2="1276.2" stroke="#1e1e1e" stroke-width="1.3"/>
<line x1="522.3" y1="1276.2" x2="724.2" y2="1276.2" stroke="#1e1e1e" stroke-width="1.3"/>
<rect x="530.8" y="847.3" width="181.2" height="12.0" fill="none" stroke="#333" stroke-width="1.3"/>
<rect x="530.8" y="845.3" width="14.2" height="14.0" fill="none" stroke="#1e1e1e" stroke-width="1.3"/>
<line x1="534.5" y1="847.3" x2="534.5" y2="859.3" stroke="#1e1e1e" stroke-width="1.3"/>
<rect x="531.0" y="864.2" width="181.0" height="380.8" fill="none" stroke="#222" stroke-width="1.3"/>
<rect x="543.4" y="1022.4" width="14.3" height="14.3" fill="none" stroke="#333" stroke-width="1.3"/>
<line x1="547.3" y1="1043.2" x2="712.0" y2="1043.2" stroke="#333" stroke-width="1.3"/>
<line x1="547.3" y1="1043.2" x2="547.3" y2="1068.2" stroke="#1e1e1e" stroke-width="1.3"/>
<line x1="543.4" y1="1068.2" x2="712.0" y2="1068.2" stroke="#1e1e1e" stroke-width="1.3"/>
<rect x="543.4" y="1053.9" width="14.3" height="14.3" fill="none" stroke="#333" stroke-width="1.3"/>
<line x1="547.3" y1="1074.6" x2="712.0" y2="1074.6" stroke="#333" stroke-width="1.3"/>
<line x1="547.3" y1="1074.6" x2="547.3" y2="1099.9" stroke="#1e1e1e" stroke-width="1.3"/>
<line x1="543.4" y1="1099.9" x2="712.0" y2="1099.9" stroke="#1e1e1e" stroke-width="1.3"/>
<rect x="543.4" y="1085.8" width="14.3" height="14.1" fill="none" stroke="#333" stroke-width="1.3"/>
<line x1="547.3" y1="1106.5" x2="712.0" y2="1106.5" stroke="#333" stroke-width="1.3"/>
<line x1="547.3" y1="1106.5" x2="547.3" y2="1131.3" stroke="#1e1e1e" stroke-width="1.3"/>
<line x1="543.4" y1="1131.3" x2="712.0" y2="1131.3" stroke="#1e1e1e" stroke-width="1.3"/>
<rect x="543.4" y="1117.4" width="14.3" height="13.9" fill="none" stroke="#333" stroke-width="1.3"/>
<line x1="547.3" y1="1137.6" x2="712.0" y2="1137.6" stroke="#333" stroke-width="1.3"/>
<line x1="547.3" y1="1137.6" x2="547.3" y2="1150.3" stroke="#1e1e1e" stroke-width="1.3"/>
<line x1="543.4" y1="1150.3" x2="712.0" y2="1150.3" stroke="#1e1e1e" stroke-width="1.3"/>
<rect x="543.4" y="1136.4" width="14.3" height="13.9" fill="none" stroke="#333" stroke-width="1.3"/>
<line x1="547.3" y1="1156.5" x2="712.0" y2="1156.5" stroke="#333" stroke-width="1.3"/>
<line x1="547.3" y1="1156.5" x2="547.3" y2="1169.2" stroke="#1e1e1e" stroke-width="1.3"/>
<line x1="543.4" y1="1169.2" x2="712.0" y2="1169.2" stroke="#1e1e1e" stroke-width="1.3"/>
<rect x="543.4" y="1155.3" width="14.3" height="13.9" fill="none" stroke="#333" stroke-width="1.3"/>
<line x1="547.3" y1="1175.7" x2="712.0" y2="1175.7" stroke="#333" stroke-width="1.3"/>
<line x1="547.3" y1="1175.7" x2="547.3" y2="1188.4" stroke="#1e1e1e" stroke-width="1.3"/>
<line x1="543.4" y1="1188.4" x2="712.0" y2="1188.4" stroke="#1e1e1e" stroke-width="1.3"/>
<rect x="543.4" y="1174.5" width="14.3" height="13.9" fill="none" stroke="#333" stroke-width="1.3"/>
<line x1="547.3" y1="1194.5" x2="712.0" y2="1194.5" stroke="#333" stroke-width="1.3"/>
<line x1="547.3" y1="1194.5" x2="547.3" y2="1207.2" stroke="#1e1e1e" stroke-width="1.3"/>
<line x1="543.4" y1="1207.2" x2="712.0" y2="1207.2" stroke="#1e1e1e" stroke-width="1.3"/>
<rect x="543.4" y="1193.3" width="14.3" height="13.9" fill="none" stroke="#333" stroke-width="1.3"/>
<line x1="547.3" y1="1213.4" x2="712.0" y2="1213.4" stroke="#333" stroke-width="1.3"/>
<line x1="547.3" y1="1213.4" x2="547.3" y2="1226.1" stroke="#1e1e1e" stroke-width="1.3"/>
<line x1="543.4" y1="1226.1" x2="712.0" y2="1226.1" stroke="#1e1e1e" stroke-width="1.3"/>
<rect x="543.4" y="1212.2" width="14.3" height="13.9" fill="none" stroke="#333" stroke-width="1.3"/>
<line x1="547.3" y1="1232.5" x2="712.0" y2="1232.5" stroke="#333" stroke-width="1.3"/>
<line x1="547.3" y1="1232.5" x2="547.3" y2="1245.2" stroke="#1e1e1e" stroke-width="1.3"/>
<line x1="543.4" y1="1245.2" x2="712.0" y2="1245.2" stroke="#1e1e1e" stroke-width="1.3"/>
<rect x="543.4" y="1231.3" width="14.3" height="13.9" fill="none" stroke="#333" stroke-width="1.3"/>
<rect x="530.5" y="1251.4" width="181.5" height="12.6" fill="none" stroke="#333" stroke-width="1.3"/>
<rect x="530.5" y="1250.3" width="14.5" height="13.7" fill="none" stroke="#1e1e1e" stroke-width="1.3"/>
<line x1="534.4" y1="1251.4" x2="534.4" y2="1264.0" stroke="#1e1e1e" stroke-width="1.3"/>
<rect x="534.4" y="1270.6" width="178.0" height="50.7" fill="none" stroke="#333" stroke-width="1.3"/>
<line x1="522.3" y1="1333.8" x2="721.4" y2="1333.8" stroke="#1e1e1e" stroke-width="1.3"/>
<line x1="721.4" y1="1276.2" x2="721.4" y2="1333.8" stroke="#1e1e1e" stroke-width="1.3"/>
<rect x="1050.2" y="1134.0" width="39.4" height="140.3" fill="none" stroke="#1e1e1e" stroke-width="1.3"/>
</svg>
</div>
</body></html>
